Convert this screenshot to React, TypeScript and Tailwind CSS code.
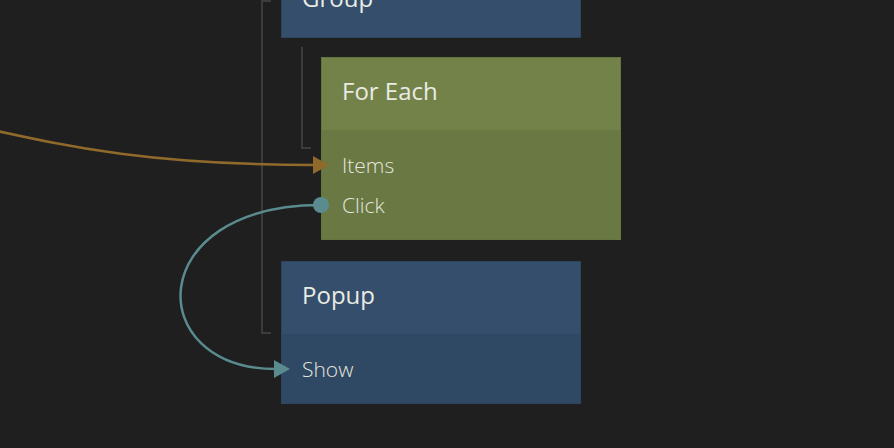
const font = { fontFamily: '"Open Sans", "Noto Sans", sans-serif' };

type NodeProps = {
  title: string;
  x: number;
  y: number;
  header: string;
  body: string;
  border: string;
  ports: string[];
  bodyH: number;
};

function GraphNode({ title, x, y, header, body, border, ports, bodyH }: NodeProps) {
  return (
    <div
      className={`absolute w-[300px] flex flex-col border ${border}`}
      style={{ left: x, top: y }}
    >
      <div className={`h-[72px] flex items-center px-5 pb-[6px] text-[24px] text-[#e9ebe4] ${header}`}>
        {title}
      </div>
      {ports.length > 0 && (
        <div className={`flex flex-col px-5 pt-[24px] gap-[18px] ${body}`} style={{ height: bodyH }}>
          {ports.map((p) => (
            <div key={p} className="text-[21px] leading-[22px] font-light text-[#e4e7de]">
              {p}
            </div>
          ))}
        </div>
      )}
    </div>
  );
}

export default function App() {
  return (
    <div className="relative w-[894px] h-[448px] bg-[#1f1f1f] overflow-hidden" style={font}>
      {/* hierarchy brackets */}
      <div className="absolute left-[261px] top-0 w-[10px] h-[334px] border-l-2 border-t-2 border-b-2 border-[#3c3c3c]" />
      <div className="absolute left-[301px] top-[47px] w-[10px] h-[102px] border-l-2 border-b-2 border-[#3c3c3c]" />

      <GraphNode
        title="Group"
        x={281}
        y={-36}
        header="bg-[#344e6b]"
        body="bg-[#344e6b]"
        border="border-[#2e4560]"
        ports={[]}
        bodyH={0}
      />

      <GraphNode
        title="For Each"
        x={321}
        y={57}
        header="bg-[#738249]"
        body="bg-[#6a7843]"
        border="border-[#667440]"
        ports={['Items', 'Click']}
        bodyH={109}
      />

      <GraphNode
        title="Popup"
        x={281}
        y={261}
        header="bg-[#344e6b]"
        body="bg-[#2f4864]"
        border="border-[#2e4560]"
        ports={['Show']}
        bodyH={69}
      />

      {/* connections */}
      <svg className="absolute left-0 top-0" width={894} height={448}>
        <path
          d="M -340 93 C -12 93, -12 165, 315 165"
          fill="none"
          stroke="#8f6a2a"
          strokeWidth={2.5}
        />
        <polygon points="313,156 329,165 313,174" fill="#8f6a2a" />
        <path
          d="M 321 205 C 142 205, 142 369, 276 369"
          fill="none"
          stroke="#5a8c8f"
          strokeWidth={2.5}
        />
        <polygon points="274,360 290,369 274,378" fill="#5a8c8f" />
        <circle cx={321} cy={205} r={8} fill="#5a8c8f" />
      </svg>
    </div>
  );
}
